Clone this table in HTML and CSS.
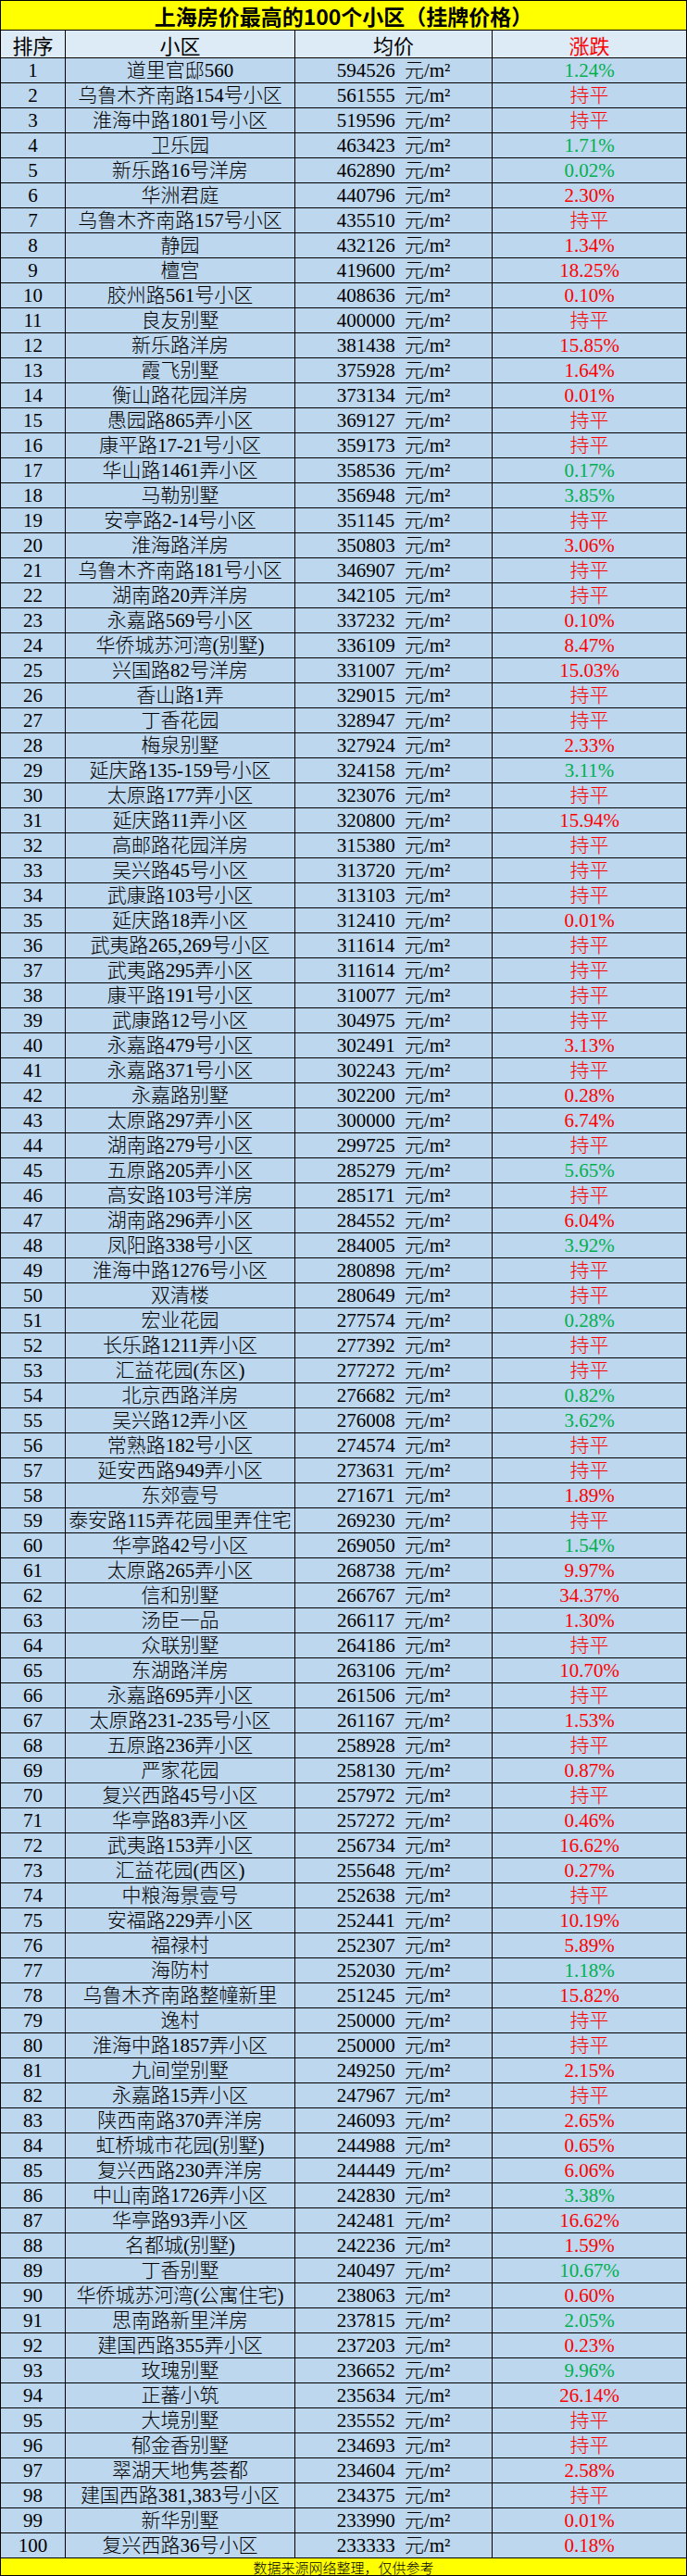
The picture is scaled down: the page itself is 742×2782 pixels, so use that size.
FILE: index.html
```html
<!DOCTYPE html>
<html lang="zh-CN">
<head>
<meta charset="utf-8">
<title>上海房价最高的100个小区（挂牌价格）</title>
<link rel="stylesheet" href="styles.css">
</head>
<body>
<div class="sheet">
<div class="title">上海房价最高的100个小区（挂牌价格）</div>
<div class="row head"><div class="c">排序</div><div class="c">小区</div><div class="c">均价</div><div class="c r">涨跌</div></div>
<div class="row"><div class="c">1</div><div class="c">道里官邸560</div><div class="c p">594526 元/m²</div><div class="c g">1.24%</div></div>
<div class="row"><div class="c">2</div><div class="c">乌鲁木齐南路154号小区</div><div class="c p">561555 元/m²</div><div class="c r">持平</div></div>
<div class="row"><div class="c">3</div><div class="c">淮海中路1801号小区</div><div class="c p">519596 元/m²</div><div class="c r">持平</div></div>
<div class="row"><div class="c">4</div><div class="c">卫乐园</div><div class="c p">463423 元/m²</div><div class="c g">1.71%</div></div>
<div class="row"><div class="c">5</div><div class="c">新乐路16号洋房</div><div class="c p">462890 元/m²</div><div class="c g">0.02%</div></div>
<div class="row"><div class="c">6</div><div class="c">华洲君庭</div><div class="c p">440796 元/m²</div><div class="c r">2.30%</div></div>
<div class="row"><div class="c">7</div><div class="c">乌鲁木齐南路157号小区</div><div class="c p">435510 元/m²</div><div class="c r">持平</div></div>
<div class="row"><div class="c">8</div><div class="c">静园</div><div class="c p">432126 元/m²</div><div class="c r">1.34%</div></div>
<div class="row"><div class="c">9</div><div class="c">檀宫</div><div class="c p">419600 元/m²</div><div class="c r">18.25%</div></div>
<div class="row"><div class="c">10</div><div class="c">胶州路561号小区</div><div class="c p">408636 元/m²</div><div class="c r">0.10%</div></div>
<div class="row"><div class="c">11</div><div class="c">良友别墅</div><div class="c p">400000 元/m²</div><div class="c r">持平</div></div>
<div class="row"><div class="c">12</div><div class="c">新乐路洋房</div><div class="c p">381438 元/m²</div><div class="c r">15.85%</div></div>
<div class="row"><div class="c">13</div><div class="c">霞飞别墅</div><div class="c p">375928 元/m²</div><div class="c r">1.64%</div></div>
<div class="row"><div class="c">14</div><div class="c">衡山路花园洋房</div><div class="c p">373134 元/m²</div><div class="c r">0.01%</div></div>
<div class="row"><div class="c">15</div><div class="c">愚园路865弄小区</div><div class="c p">369127 元/m²</div><div class="c r">持平</div></div>
<div class="row"><div class="c">16</div><div class="c">康平路17-21号小区</div><div class="c p">359173 元/m²</div><div class="c r">持平</div></div>
<div class="row"><div class="c">17</div><div class="c">华山路1461弄小区</div><div class="c p">358536 元/m²</div><div class="c g">0.17%</div></div>
<div class="row"><div class="c">18</div><div class="c">马勒别墅</div><div class="c p">356948 元/m²</div><div class="c g">3.85%</div></div>
<div class="row"><div class="c">19</div><div class="c">安亭路2-14号小区</div><div class="c p">351145 元/m²</div><div class="c r">持平</div></div>
<div class="row"><div class="c">20</div><div class="c">淮海路洋房</div><div class="c p">350803 元/m²</div><div class="c r">3.06%</div></div>
<div class="row"><div class="c">21</div><div class="c">乌鲁木齐南路181号小区</div><div class="c p">346907 元/m²</div><div class="c r">持平</div></div>
<div class="row"><div class="c">22</div><div class="c">湖南路20弄洋房</div><div class="c p">342105 元/m²</div><div class="c r">持平</div></div>
<div class="row"><div class="c">23</div><div class="c">永嘉路569号小区</div><div class="c p">337232 元/m²</div><div class="c r">0.10%</div></div>
<div class="row"><div class="c">24</div><div class="c">华侨城苏河湾(别墅)</div><div class="c p">336109 元/m²</div><div class="c r">8.47%</div></div>
<div class="row"><div class="c">25</div><div class="c">兴国路82号洋房</div><div class="c p">331007 元/m²</div><div class="c r">15.03%</div></div>
<div class="row"><div class="c">26</div><div class="c">香山路1弄</div><div class="c p">329015 元/m²</div><div class="c r">持平</div></div>
<div class="row"><div class="c">27</div><div class="c">丁香花园</div><div class="c p">328947 元/m²</div><div class="c r">持平</div></div>
<div class="row"><div class="c">28</div><div class="c">梅泉别墅</div><div class="c p">327924 元/m²</div><div class="c r">2.33%</div></div>
<div class="row"><div class="c">29</div><div class="c">延庆路135-159号小区</div><div class="c p">324158 元/m²</div><div class="c g">3.11%</div></div>
<div class="row"><div class="c">30</div><div class="c">太原路177弄小区</div><div class="c p">323076 元/m²</div><div class="c r">持平</div></div>
<div class="row"><div class="c">31</div><div class="c">延庆路11弄小区</div><div class="c p">320800 元/m²</div><div class="c r">15.94%</div></div>
<div class="row"><div class="c">32</div><div class="c">高邮路花园洋房</div><div class="c p">315380 元/m²</div><div class="c r">持平</div></div>
<div class="row"><div class="c">33</div><div class="c">吴兴路45号小区</div><div class="c p">313720 元/m²</div><div class="c r">持平</div></div>
<div class="row"><div class="c">34</div><div class="c">武康路103号小区</div><div class="c p">313103 元/m²</div><div class="c r">持平</div></div>
<div class="row"><div class="c">35</div><div class="c">延庆路18弄小区</div><div class="c p">312410 元/m²</div><div class="c r">0.01%</div></div>
<div class="row"><div class="c">36</div><div class="c">武夷路265,269号小区</div><div class="c p">311614 元/m²</div><div class="c r">持平</div></div>
<div class="row"><div class="c">37</div><div class="c">武夷路295弄小区</div><div class="c p">311614 元/m²</div><div class="c r">持平</div></div>
<div class="row"><div class="c">38</div><div class="c">康平路191号小区</div><div class="c p">310077 元/m²</div><div class="c r">持平</div></div>
<div class="row"><div class="c">39</div><div class="c">武康路12号小区</div><div class="c p">304975 元/m²</div><div class="c r">持平</div></div>
<div class="row"><div class="c">40</div><div class="c">永嘉路479号小区</div><div class="c p">302491 元/m²</div><div class="c r">3.13%</div></div>
<div class="row"><div class="c">41</div><div class="c">永嘉路371号小区</div><div class="c p">302243 元/m²</div><div class="c r">持平</div></div>
<div class="row"><div class="c">42</div><div class="c">永嘉路别墅</div><div class="c p">302200 元/m²</div><div class="c r">0.28%</div></div>
<div class="row"><div class="c">43</div><div class="c">太原路297弄小区</div><div class="c p">300000 元/m²</div><div class="c r">6.74%</div></div>
<div class="row"><div class="c">44</div><div class="c">湖南路279号小区</div><div class="c p">299725 元/m²</div><div class="c r">持平</div></div>
<div class="row"><div class="c">45</div><div class="c">五原路205弄小区</div><div class="c p">285279 元/m²</div><div class="c g">5.65%</div></div>
<div class="row"><div class="c">46</div><div class="c">高安路103号洋房</div><div class="c p">285171 元/m²</div><div class="c r">持平</div></div>
<div class="row"><div class="c">47</div><div class="c">湖南路296弄小区</div><div class="c p">284552 元/m²</div><div class="c r">6.04%</div></div>
<div class="row"><div class="c">48</div><div class="c">凤阳路338号小区</div><div class="c p">284005 元/m²</div><div class="c g">3.92%</div></div>
<div class="row"><div class="c">49</div><div class="c">淮海中路1276号小区</div><div class="c p">280898 元/m²</div><div class="c r">持平</div></div>
<div class="row"><div class="c">50</div><div class="c">双清楼</div><div class="c p">280649 元/m²</div><div class="c r">持平</div></div>
<div class="row"><div class="c">51</div><div class="c">宏业花园</div><div class="c p">277574 元/m²</div><div class="c g">0.28%</div></div>
<div class="row"><div class="c">52</div><div class="c">长乐路1211弄小区</div><div class="c p">277392 元/m²</div><div class="c r">持平</div></div>
<div class="row"><div class="c">53</div><div class="c">汇益花园(东区)</div><div class="c p">277272 元/m²</div><div class="c r">持平</div></div>
<div class="row"><div class="c">54</div><div class="c">北京西路洋房</div><div class="c p">276682 元/m²</div><div class="c g">0.82%</div></div>
<div class="row"><div class="c">55</div><div class="c">吴兴路12弄小区</div><div class="c p">276008 元/m²</div><div class="c g">3.62%</div></div>
<div class="row"><div class="c">56</div><div class="c">常熟路182号小区</div><div class="c p">274574 元/m²</div><div class="c r">持平</div></div>
<div class="row"><div class="c">57</div><div class="c">延安西路949弄小区</div><div class="c p">273631 元/m²</div><div class="c r">持平</div></div>
<div class="row"><div class="c">58</div><div class="c">东郊壹号</div><div class="c p">271671 元/m²</div><div class="c r">1.89%</div></div>
<div class="row"><div class="c">59</div><div class="c">泰安路115弄花园里弄住宅</div><div class="c p">269230 元/m²</div><div class="c r">持平</div></div>
<div class="row"><div class="c">60</div><div class="c">华亭路42号小区</div><div class="c p">269050 元/m²</div><div class="c g">1.54%</div></div>
<div class="row"><div class="c">61</div><div class="c">太原路265弄小区</div><div class="c p">268738 元/m²</div><div class="c r">9.97%</div></div>
<div class="row"><div class="c">62</div><div class="c">信和别墅</div><div class="c p">266767 元/m²</div><div class="c r">34.37%</div></div>
<div class="row"><div class="c">63</div><div class="c">汤臣一品</div><div class="c p">266117 元/m²</div><div class="c r">1.30%</div></div>
<div class="row"><div class="c">64</div><div class="c">众联别墅</div><div class="c p">264186 元/m²</div><div class="c r">持平</div></div>
<div class="row"><div class="c">65</div><div class="c">东湖路洋房</div><div class="c p">263106 元/m²</div><div class="c r">10.70%</div></div>
<div class="row"><div class="c">66</div><div class="c">永嘉路695弄小区</div><div class="c p">261506 元/m²</div><div class="c r">持平</div></div>
<div class="row"><div class="c">67</div><div class="c">太原路231-235号小区</div><div class="c p">261167 元/m²</div><div class="c r">1.53%</div></div>
<div class="row"><div class="c">68</div><div class="c">五原路236弄小区</div><div class="c p">258928 元/m²</div><div class="c r">持平</div></div>
<div class="row"><div class="c">69</div><div class="c">严家花园</div><div class="c p">258130 元/m²</div><div class="c r">0.87%</div></div>
<div class="row"><div class="c">70</div><div class="c">复兴西路45号小区</div><div class="c p">257972 元/m²</div><div class="c r">持平</div></div>
<div class="row"><div class="c">71</div><div class="c">华亭路83弄小区</div><div class="c p">257272 元/m²</div><div class="c r">0.46%</div></div>
<div class="row"><div class="c">72</div><div class="c">武夷路153弄小区</div><div class="c p">256734 元/m²</div><div class="c r">16.62%</div></div>
<div class="row"><div class="c">73</div><div class="c">汇益花园(西区)</div><div class="c p">255648 元/m²</div><div class="c r">0.27%</div></div>
<div class="row"><div class="c">74</div><div class="c">中粮海景壹号</div><div class="c p">252638 元/m²</div><div class="c r">持平</div></div>
<div class="row"><div class="c">75</div><div class="c">安福路229弄小区</div><div class="c p">252441 元/m²</div><div class="c r">10.19%</div></div>
<div class="row"><div class="c">76</div><div class="c">福禄村</div><div class="c p">252307 元/m²</div><div class="c r">5.89%</div></div>
<div class="row"><div class="c">77</div><div class="c">海防村</div><div class="c p">252030 元/m²</div><div class="c g">1.18%</div></div>
<div class="row"><div class="c">78</div><div class="c">乌鲁木齐南路整幢新里</div><div class="c p">251245 元/m²</div><div class="c r">15.82%</div></div>
<div class="row"><div class="c">79</div><div class="c">逸村</div><div class="c p">250000 元/m²</div><div class="c r">持平</div></div>
<div class="row"><div class="c">80</div><div class="c">淮海中路1857弄小区</div><div class="c p">250000 元/m²</div><div class="c r">持平</div></div>
<div class="row"><div class="c">81</div><div class="c">九间堂别墅</div><div class="c p">249250 元/m²</div><div class="c r">2.15%</div></div>
<div class="row"><div class="c">82</div><div class="c">永嘉路15弄小区</div><div class="c p">247967 元/m²</div><div class="c r">持平</div></div>
<div class="row"><div class="c">83</div><div class="c">陕西南路370弄洋房</div><div class="c p">246093 元/m²</div><div class="c r">2.65%</div></div>
<div class="row"><div class="c">84</div><div class="c">虹桥城市花园(别墅)</div><div class="c p">244988 元/m²</div><div class="c r">0.65%</div></div>
<div class="row"><div class="c">85</div><div class="c">复兴西路230弄洋房</div><div class="c p">244449 元/m²</div><div class="c r">6.06%</div></div>
<div class="row"><div class="c">86</div><div class="c">中山南路1726弄小区</div><div class="c p">242830 元/m²</div><div class="c g">3.38%</div></div>
<div class="row"><div class="c">87</div><div class="c">华亭路93弄小区</div><div class="c p">242481 元/m²</div><div class="c r">16.62%</div></div>
<div class="row"><div class="c">88</div><div class="c">名都城(别墅)</div><div class="c p">242236 元/m²</div><div class="c r">1.59%</div></div>
<div class="row"><div class="c">89</div><div class="c">丁香别墅</div><div class="c p">240497 元/m²</div><div class="c g">10.67%</div></div>
<div class="row"><div class="c">90</div><div class="c">华侨城苏河湾(公寓住宅)</div><div class="c p">238063 元/m²</div><div class="c r">0.60%</div></div>
<div class="row"><div class="c">91</div><div class="c">思南路新里洋房</div><div class="c p">237815 元/m²</div><div class="c g">2.05%</div></div>
<div class="row"><div class="c">92</div><div class="c">建国西路355弄小区</div><div class="c p">237203 元/m²</div><div class="c r">0.23%</div></div>
<div class="row"><div class="c">93</div><div class="c">玫瑰别墅</div><div class="c p">236652 元/m²</div><div class="c g">9.96%</div></div>
<div class="row"><div class="c">94</div><div class="c">正蕃小筑</div><div class="c p">235634 元/m²</div><div class="c r">26.14%</div></div>
<div class="row"><div class="c">95</div><div class="c">大境别墅</div><div class="c p">235552 元/m²</div><div class="c r">持平</div></div>
<div class="row"><div class="c">96</div><div class="c">郁金香别墅</div><div class="c p">234693 元/m²</div><div class="c r">持平</div></div>
<div class="row"><div class="c">97</div><div class="c">翠湖天地隽荟都</div><div class="c p">234604 元/m²</div><div class="c r">2.58%</div></div>
<div class="row"><div class="c">98</div><div class="c">建国西路381,383号小区</div><div class="c p">234375 元/m²</div><div class="c r">持平</div></div>
<div class="row"><div class="c">99</div><div class="c">新华别墅</div><div class="c p">233990 元/m²</div><div class="c r">0.01%</div></div>
<div class="row"><div class="c">100</div><div class="c">复兴西路36号小区</div><div class="c p">233333 元/m²</div><div class="c r">0.18%</div></div>
<div class="foot">数据来源网络整理，仅供参考</div>
</div>
</body>
</html>
```
FILE: styles.css
```css
* { box-sizing: border-box; }
html, body { margin: 0; padding: 0; background: #fff; }
.sheet {
  width: 742px;
  border-left: 1px solid #000;
  border-right: 1px solid #000;
  font-family: "Liberation Serif", "Noto Sans CJK SC", serif;
  color: #000;
}
.title {
  height: 33px;
  background: #ffff00;
  border-top: 1px solid #000;
  border-bottom: 1px solid #000;
  display: flex;
  align-items: center;
  justify-content: center;
  font-family: "Noto Sans CJK SC", sans-serif;
  font-size: 23px;
  font-weight: 700;
  line-height: 1;
  padding-top: 2px;
}
.row {
  display: grid;
  grid-template-columns: 70px 248px 213px 1fr;
  height: 27px;
  background: #bdd7ee;
  border-bottom: 1px solid #000;
}
.row.head {
  height: 30px;
  background: #ddebf7;
  font-family: "Noto Sans CJK SC", sans-serif;
  font-size: 22px;
}
.c {
  display: flex;
  align-items: center;
  justify-content: center;
  white-space: nowrap;
  overflow: visible;
  border-right: 1px solid #000;
  font-size: 21px;
  font-weight: 300;
  line-height: 1;
}
.head .c { font-size: 22px; font-weight: 400; }
.c:last-child { border-right: none; }
.p { word-spacing: 5px; }
.g { color: #00b050; }
.r { color: #ff0000; }
.foot {
  height: 19px;
  background: #ffff00;
  border-bottom: 1px solid #000;
  display: flex;
  align-items: center;
  justify-content: center;
  font-family: "Noto Sans CJK SC", sans-serif;
  font-size: 15px;
  font-weight: 300;
  line-height: 1;
}
```
